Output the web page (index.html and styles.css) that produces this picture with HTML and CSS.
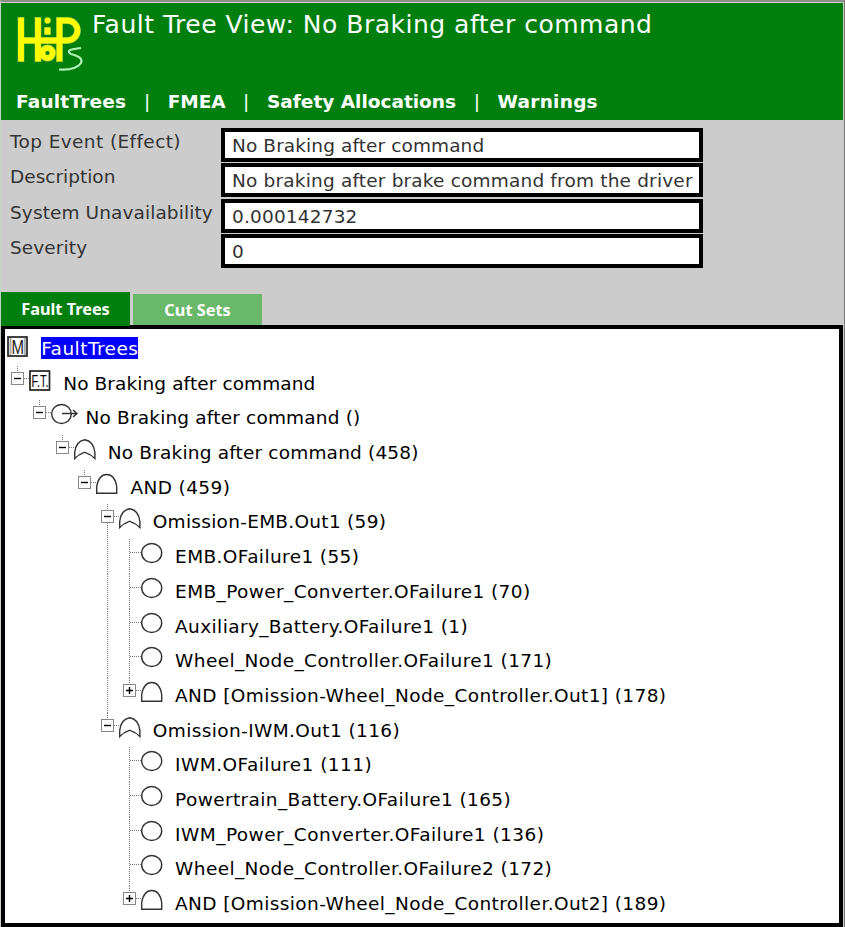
FILE: index.html
```
<!DOCTYPE html>
<html lang="en">
<head>
<meta charset="utf-8">
<title>Fault Tree View</title>
<link rel="stylesheet" href="styles.css">
</head>
<body>
<svg class="defs" width="0" height="0">
  <symbol id="minus" viewBox="0 0 24 35"><path class="dots" d="M12.5 0v6M19 12.5h5"/><rect class="box" x="6.5" y="6.5" width="12" height="12"/><path class="sign" d="M9 12.5h7"/></symbol>
  <symbol id="minusdown" viewBox="0 0 24 35"><path class="dots" d="M12.5 0v6M12.5 19v16M19 12.5h5"/><rect class="box" x="6.5" y="6.5" width="12" height="12"/><path class="sign" d="M9 12.5h7"/></symbol>
  <symbol id="plus" viewBox="0 0 24 35"><path class="dots" d="M12.5 0v6M19 12.5h5"/><rect class="box" x="6.5" y="6.5" width="12" height="12"/><path class="sign" d="M9 12.5h7M12.5 9v7"/></symbol>
  <symbol id="leaf" viewBox="0 0 24 35"><path class="dots" d="M12.5 0v35M13 13.5h11"/></symbol>
  <symbol id="line" viewBox="0 0 22 35"><path class="dots" d="M12.5 0v35"/></symbol>
  <symbol id="circle" viewBox="0 0 28 35"><ellipse class="ink" cx="10.7" cy="14" rx="10" ry="9.5"/></symbol>
  <symbol id="event" viewBox="0 0 28 35"><ellipse class="ink" cx="10.5" cy="14" rx="9.8" ry="9.5"/><path class="ink" d="M11 13.5h15M22 10l4 3.500-4 3.500"/></symbol>
  <symbol id="or" viewBox="0 0 28 35"><path class="ink" d="M.7 23.500V17.500C1.500 9.500 5.500 5.500 10.700 4.700C16 5.500 20 9.500 20.900 17.500V23.500C17 19.500 14 18.500 10.700 17.300C7.500 18.500 4.500 19.500 .7 23.500Z"/></symbol>
  <symbol id="and" viewBox="0 0 28 35"><path class="ink" d="M.7 23.300V16.500C2 9 5.500 4.500 10.700 4.500S19.500 9 20.700 16.500V23.300Z"/></symbol>
</svg>
<div class="window">
  <header class="banner">
    <div class="brand">
      <svg class="logo" width="70" height="60" viewBox="0 0 70 60" aria-label="HiP-HOPS">
        <g class="halo"><path d="M6 5V50M23 5V50M6 28.500H23M44.500 50V8.500H52.500A10 10 0 0 1 52.500 28.500H23M32.500 15V23"/><circle cx="32.500" cy="41" r="5.200"/></g>
        <g class="mark"><path d="M6 5.500V49.500M23 5.500V49.500M6 28.500H23M44.500 49.500V8.500H52.500A10 10 0 0 1 52.500 28.500H23M32.500 15.500V22.500"/><circle cx="32.500" cy="41" r="5.200"/></g>
        <circle class="dot" cx="32.500" cy="8.500" r="3.200"/>
        <path class="swoosh" d="M66 36C57 37 50 38.500 56 42C63 44 68 46 66 51C62 57 53 58 44 57.500"/>
      </svg>
      <h1>Fault Tree View: No Braking after command</h1>
    </div>
    <nav><b class="n1">FaultTrees</b><i>|</i><b class="n2">FMEA</b><i>|</i><b>Safety Allocations</b><i>|</i><b class="n4">Warnings</b></nav>
  </header>
  <section class="fields">
    <div class="field"><label class="s4">Top Event (Effect)</label><div class="value s1"><span>No Braking after command</span></div></div>
    <div class="field"><label>Description</label><div class="value s2"><span>No braking after brake command from the driver</span></div></div>
    <div class="field"><label class="s1">System Unavailability</label><div class="value s2"><span>0.000142732</span></div></div>
    <div class="field"><label class="s1">Severity</label><div class="value"><span>0</span></div></div>
  </section>
  <div class="tabs"><div class="tab active">Fault Trees</div><div class="tab">Cut Sets</div></div>
  <main class="tree">
    <div class="row root"><svg class="icon" viewBox="0 0 28 35"><rect class="frame" x="1" y="6" width="19" height="19"/><path class="bars" d="M3.500 7v17M17.800 7v17"/><text class="m" x="4.500" y="22.500" textLength="12.500" lengthAdjust="spacingAndGlyphs">M</text></svg><span class="selected s5">FaultTrees</span></div>
    <div class="row"><svg class="twig"><use href="#minus"/></svg><svg class="icon" viewBox="0 0 28 35"><rect class="frame" x="1" y="5" width="19.500" height="19"/><text class="ft" x="2.500" y="21" textLength="17" lengthAdjust="spacingAndGlyphs">F.T.</text></svg><span class="s1">No Braking after command</span></div>
    <div class="row d2"><svg class="twig"><use href="#minus"/></svg><svg class="icon"><use href="#event"/></svg><span class="s2">No Braking after command ()</span></div>
    <div class="row d3"><svg class="twig"><use href="#minus"/></svg><svg class="icon"><use href="#or"/></svg><span class="s2">No Braking after command (458)</span></div>
    <div class="row d4"><svg class="twig"><use href="#minus"/></svg><svg class="icon"><use href="#and"/></svg><span class="s4">AND (459)</span></div>
    <div class="row d5"><svg class="twig"><use href="#minusdown"/></svg><svg class="icon"><use href="#or"/></svg><span class="s3">Omission-EMB.Out1 (59)</span></div>
    <div class="row d5"><svg class="guide"><use href="#line"/></svg><svg class="twig"><use href="#leaf"/></svg><svg class="icon"><use href="#circle"/></svg><span class="s4">EMB.OFailure1 (55)</span></div>
    <div class="row d5"><svg class="guide"><use href="#line"/></svg><svg class="twig"><use href="#leaf"/></svg><svg class="icon"><use href="#circle"/></svg><span class="s4">EMB_Power_Converter.OFailure1 (70)</span></div>
    <div class="row d5"><svg class="guide"><use href="#line"/></svg><svg class="twig"><use href="#leaf"/></svg><svg class="icon"><use href="#circle"/></svg><span class="s4">Auxiliary_Battery.OFailure1 (1)</span></div>
    <div class="row d5"><svg class="guide"><use href="#line"/></svg><svg class="twig"><use href="#leaf"/></svg><svg class="icon"><use href="#circle"/></svg><span class="s4">Wheel_Node_Controller.OFailure1 (171)</span></div>
    <div class="row d5"><svg class="guide"><use href="#line"/></svg><svg class="twig"><use href="#plus"/></svg><svg class="icon"><use href="#and"/></svg><span class="s4">AND [Omission-Wheel_Node_Controller.Out1] (178)</span></div>
    <div class="row d5"><svg class="twig"><use href="#minus"/></svg><svg class="icon"><use href="#or"/></svg><span class="s4">Omission-IWM.Out1 (116)</span></div>
    <div class="row d6"><svg class="twig"><use href="#leaf"/></svg><svg class="icon"><use href="#circle"/></svg><span class="s5">IWM.OFailure1 (111)</span></div>
    <div class="row d6"><svg class="twig"><use href="#leaf"/></svg><svg class="icon"><use href="#circle"/></svg><span class="s4">Powertrain_Battery.OFailure1 (165)</span></div>
    <div class="row d6"><svg class="twig"><use href="#leaf"/></svg><svg class="icon"><use href="#circle"/></svg><span class="s5">IWM_Power_Converter.OFailure1 (136)</span></div>
    <div class="row d6"><svg class="twig"><use href="#leaf"/></svg><svg class="icon"><use href="#circle"/></svg><span class="s4">Wheel_Node_Controller.OFailure2 (172)</span></div>
    <div class="row d6"><svg class="twig"><use href="#plus"/></svg><svg class="icon"><use href="#and"/></svg><span class="s4">AND [Omission-Wheel_Node_Controller.Out2] (189)</span></div>
  </main>
</div>
</body>
</html>
```
FILE: styles.css
```
* { box-sizing: border-box; }
body { margin: 0; background: #ccc; font-family: "DejaVu Sans", Verdana, sans-serif; font-size: 18.5px; overflow: hidden; }
.defs { display: block; }
.window { width: 845px; height: 927px; border-top: 2px solid #8a8f8a; border-left: 1px solid #c3d5c3; border-right: 1px solid #777; padding: 1px 1px 0 0; background: #ccc; display: flex; flex-direction: column; }
.banner { height: 117px; background: #007f0e; color: #fff; flex: none; }
.brand { display: flex; height: 81px; padding: 9px 0 0 14px; }
.logo { flex: none; }
.logo g { fill: none; }
.halo { stroke: #5fa84a; stroke-width: 7px; }
.mark { stroke: #ff0; stroke-width: 5.800; }
.dot { fill: #ff0; stroke: #5fa84a; stroke-width: .6; }
.swoosh { fill: none; stroke: #b4f0b8; stroke-width: 2.200; }
h1 { margin: -3px 0 0 7px; font-size: 25px; line-height: 31px; font-weight: 400; letter-spacing: .5px; white-space: nowrap; }
nav { display: flex; align-items: center; height: 36px; padding-left: 15px; line-height: 36px; }
nav b { white-space: nowrap; }
nav i { font-style: normal; font-weight: 400; width: 41.600px; text-align: center; }
.n1 { letter-spacing: .2px; }
.n2 { letter-spacing: -.1px; }
.n4 { letter-spacing: .25px; }
.fields { height: 172px; padding: 8px 0 0; flex: none; color: #333; }
.field { display: flex; height: 35.400px; }
.field label { width: 220px; padding-left: 9px; line-height: 27px; white-space: nowrap; }
.value { width: 482px; height: 34px; border: 4px solid #000; background: #fff; padding-left: 7px; line-height: 27px; white-space: nowrap; }
.tabs { display: flex; height: 33px; gap: 3px; flex: none; align-items: flex-start; }
.tab { width: 129px; height: 31px; margin-top: 2px; background: #6ab86a; color: #fff; font: bold 16.300px/32px "Noto Sans", Tahoma, sans-serif; text-align: center; }
.tab.active { height: 34px; margin-top: 0; background: #007f0e; position: relative; line-height: 34px; }
.tree { flex: 1; border: 4px solid #000; background: #fff; padding-top: 2px; }
.row { display: flex; height: 34.700px; line-height: 35px; white-space: nowrap; color: #000; }
.root { padding-left: 2px; }
.d2 { padding-left: 22.300px; }
.d3 { padding-left: 44.600px; }
.d4 { padding-left: 67.200px; }
.d5 { padding-left: 89.600px; }
.d6 { padding-left: 111.900px; }
.s1 { letter-spacing: .1px; }
.s2 { letter-spacing: .18px; }
.s3 { letter-spacing: .28px; }
.s4 { letter-spacing: .39px; }
.s5 { letter-spacing: .46px; }
.guide { width: 22.300px; height: 35px; flex: none; }
.twig { width: 24px; height: 35px; flex: none; }
.icon { width: 28px; height: 35px; flex: none; margin-right: 6.200px; }
.dots { stroke: #777; fill: none; stroke-dasharray: 1 1; }
.box { fill: #fff; stroke: #888; }
.sign { stroke: #000; stroke-width: 1.400; fill: none; }
.ink { fill: #fff; stroke: #333; stroke-width: 1.400; }
.frame { fill: #fff; stroke: #222; stroke-width: 1.700; }
.bars { stroke: #aaa; stroke-width: 2; }
.m { font: 20px "Liberation Sans", sans-serif; fill: #222; }
.ft { font: 17px "Liberation Sans", sans-serif; }
.selected { background: #00f; color: #fff; height: 22px; line-height: 23px; margin-top: 6px; }
```
